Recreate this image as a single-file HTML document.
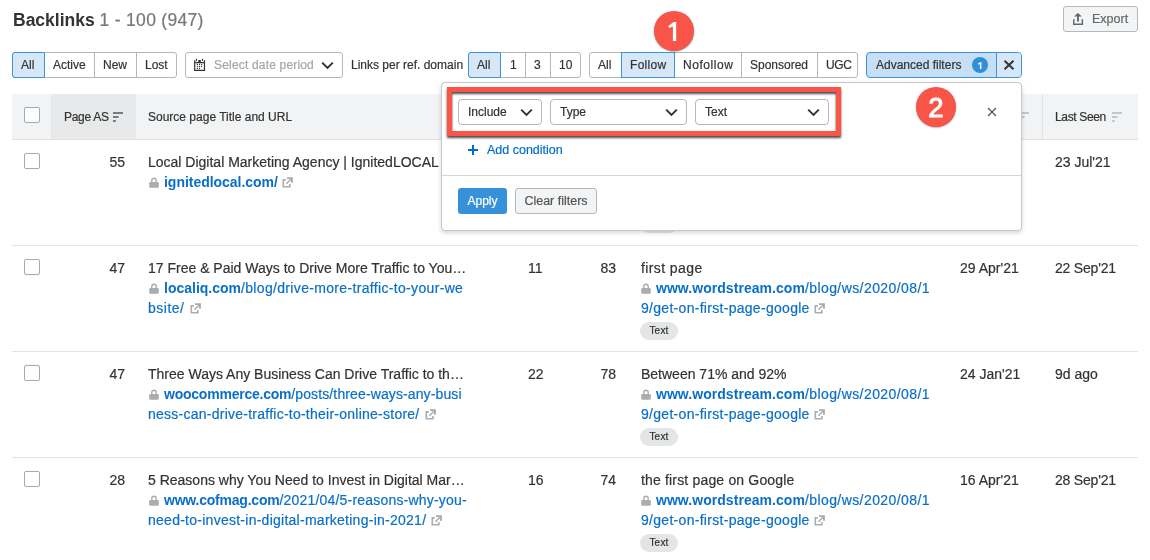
<!DOCTYPE html>
<html><head><meta charset="utf-8">
<style>
*{box-sizing:border-box;margin:0;padding:0}
html,body{width:1150px;height:560px;overflow:hidden;background:#fff}
body{position:relative;font-family:"Liberation Sans",sans-serif;color:#333;-webkit-font-smoothing:antialiased;will-change:transform;-webkit-text-stroke:0.2px}
b,.bo{-webkit-text-stroke:0}
.a{position:absolute;white-space:nowrap}
.box{position:absolute;border:1px solid #b3b8ba;border-radius:3px;background:#fff}
.vl{position:absolute;top:52px;width:1px;height:26px;background:#b3b8ba}
.bt{position:absolute;top:52px;height:26px;line-height:26px;font-size:12px;color:#333;white-space:nowrap}
.sel{position:absolute;top:52px;height:26px;border:1px solid #3b93dc;background:#d6e8f7}
.hdr{position:absolute;left:12px;top:94px;width:1126px;height:46px;background:#f2f3f4;border-bottom:1px solid #dfe1e2}
.cb{position:absolute;width:16px;height:16px;border:1px solid #a4aaad;border-radius:2px;background:#fff}
.h12{position:absolute;font-size:12px;line-height:16px;top:109px;white-space:nowrap}
.t{position:absolute;font-size:14px;line-height:20px;white-space:nowrap;color:#333}
.u{position:absolute;font-size:14px;line-height:20px;white-space:nowrap;color:#0a6fc8;letter-spacing:0.2px}
.u b{font-weight:bold}
.sep{position:absolute;left:12px;width:1126px;height:1px;background:#e2e4e5}
.lock{position:absolute;width:10px;height:10px}
.ext{position:absolute;width:11px;height:11px}
.tag{position:absolute;width:38px;height:18px;border-radius:9px;background:#e3e5e6;font-size:10px;line-height:17px;text-align:center;color:#333;letter-spacing:0.2px}
.dd{position:absolute;top:99px;height:26px;border:1px solid #b3b8ba;border-radius:4px;background:#fff;font-size:12px;line-height:24px;padding-left:9px;color:#333}
.chev{position:absolute;top:8px;right:8px;width:13px;height:9px}
.circ{-webkit-text-stroke:1px #fff;position:absolute;width:40px;height:40px;border-radius:50%;background:#f85448;color:#fff;font-weight:normal;font-size:27.5px;line-height:40px;text-align:center;box-shadow:0 0.5px 1.5px rgba(0,0,0,.45)}
.sort{position:absolute;width:10px;height:10px}
</style></head><body>

<!-- title -->
<div class="a" id="title" style="left:13px;top:10px;font-size:17.5px;line-height:20px"><b style="color:#333">Backlinks</b> <span style="color:#777;letter-spacing:0.3px">1 - 100 (947)</span></div>

<!-- export -->
<div class="box" style="left:1063px;top:6px;width:75px;height:26px;background:#f3f4f5"></div>
<svg class="a" style="left:1072px;top:12px" width="12" height="14" viewBox="0 0 12 14"><path d="M2.7 7.9H1.75V12.2H10.4V7.9H9.5" fill="none" stroke="#666" stroke-width="1.4"/><path d="M6 3.5V9.5" stroke="#666" stroke-width="1.9"/><path d="M2 4.5L5.9 0.9L9.9 4.5Z" fill="#666"/></svg>
<div class="a" id="export" style="left:1092px;top:6px;font-size:12.5px;line-height:26px;color:#666">Export</div>

<!-- group 1 -->
<div class="box" style="left:12px;top:52px;width:165px;height:26px"></div>
<div class="sel" style="left:12px;width:33px;border-radius:3px 0 0 3px"></div>
<div class="vl" style="left:94px"></div>
<div class="vl" style="left:136px"></div>
<div class="bt" style="left:21px">All</div>
<div class="bt" style="left:53px">Active</div>
<div class="bt" style="left:103px">New</div>
<div class="bt" style="left:145px">Lost</div>

<!-- date -->
<div class="box" style="left:185px;top:52px;width:158px;height:26px"></div>
<svg class="a" style="left:188px;top:54px" width="24" height="22" viewBox="0 0 24 22"><path d="M6.7 6.3V16.3H16.5V6.3M6.7 8.7H16.5" fill="none" stroke="#333" stroke-width="1.2"/><rect x="10.3" y="6" width="2.5" height="2" fill="#333"/><path d="M8.4 4.8V6.9M14.5 4.8V6.9" stroke="#333" stroke-width="1.1"/><g fill="#333"><circle cx="9.4" cy="10.4" r=".65"/><circle cx="11.5" cy="10.4" r=".65"/><circle cx="13.6" cy="10.4" r=".65"/><circle cx="9.4" cy="12.5" r=".65"/><circle cx="11.5" cy="12.5" r=".65"/><circle cx="13.6" cy="12.5" r=".65"/><circle cx="9.4" cy="14.5" r=".65"/><circle cx="11.5" cy="14.5" r=".65"/></g></svg>
<div class="bt" id="datetxt" style="left:214px;color:#a3a6a8;letter-spacing:0.18px">Select date period</div>
<svg class="a" style="left:321px;top:61px" width="13" height="9" viewBox="0 0 13 9"><path d="M1.2 1.6L6.5 6.9L11.8 1.6" fill="none" stroke="#333" stroke-width="2"/></svg>
<div class="bt" id="links" style="left:351px">Links per ref. domain</div>

<!-- group 2 -->
<div class="box" style="left:468px;top:52px;width:113px;height:26px"></div>
<div class="sel" style="left:468px;width:33px;border-radius:3px 0 0 3px"></div>
<div class="vl" style="left:525px"></div>
<div class="vl" style="left:550px"></div>
<div class="bt" style="left:477px">All</div>
<div class="bt" style="left:510px">1</div>
<div class="bt" style="left:534px">3</div>
<div class="bt" style="left:559px">10</div>

<!-- group 3 -->
<div class="box" style="left:589px;top:52px;width:269px;height:26px"></div>
<div class="sel" style="left:621px;width:54px"></div>
<div class="vl" style="left:741px"></div>
<div class="vl" style="left:817px"></div>
<div class="bt" style="left:598px">All</div>
<div class="bt" style="left:630px;letter-spacing:0.3px">Follow</div>
<div class="bt" style="left:683px;letter-spacing:0.55px">Nofollow</div>
<div class="bt" style="left:750px">Sponsored</div>
<div class="bt" style="left:826px;letter-spacing:-0.4px">UGC</div>

<!-- advanced -->
<div class="a" style="left:866px;top:52px;width:156px;height:26px;border:1px solid #3b93dc;border-radius:4px;background:#c6dff4;overflow:hidden"><div style="position:absolute;left:129px;top:0;width:30px;height:24px;background:#d6e8f7;border-left:1px solid #3b93dc"></div></div>
<div class="bt" style="left:876px">Advanced filters</div>
<svg class="a" style="left:972px;top:57px" width="16" height="16" viewBox="0 0 16 16"><circle cx="8" cy="8" r="8" fill="#2f8fd8"/><path d="M9.4 5.2V12H7.9V7L6.2 7.7L5.9 6.6L8.2 5.2Z" fill="#fff"/></svg>
<svg class="a" style="left:1003px;top:60px" width="12" height="10" viewBox="0 0 12 10"><path d="M1.5 0.8L10.5 9.2M10.5 0.8L1.5 9.2" stroke="#333" stroke-width="2"/></svg>

<!-- header -->
<div class="hdr"></div>
<div class="a" style="left:51px;top:94px;width:85px;height:45px;background:#e8e9ea"></div>
<div class="cb" style="left:24px;top:107px"></div>
<div class="h12" style="left:64px;letter-spacing:-0.3px">Page AS</div>
<svg class="sort" style="left:113px;top:112px" viewBox="0 0 10 10"><path d="M0 1H10M0 5H5.6M0 9H2.8" stroke="#555" stroke-width="1.6"/></svg>
<div class="h12" style="left:148px">Source page Title and URL</div>
<div class="a" style="left:1042px;top:94px;width:1px;height:45px;background:#e0e2e3"></div>
<svg class="sort" style="left:1019px;top:112px" viewBox="0 0 10 10"><path d="M0 1H10M0 5H5.6M0 9H2.8" stroke="#b5b8ba" stroke-width="1.6"/></svg>
<div class="h12" style="left:1055px;letter-spacing:-0.35px">Last Seen</div>
<svg class="sort" style="left:1112px;top:112px" viewBox="0 0 10 10"><path d="M0 1H10M0 5H5.6M0 9H2.8" stroke="#b5b8ba" stroke-width="1.6"/></svg>

<!-- separators -->
<div class="sep" style="top:245px"></div>
<div class="sep" style="top:351px"></div>
<div class="sep" style="top:457px"></div>

<!-- ROWS -->
<div class="cb" style="left:24px;top:153px"></div>
<div class="t" style="left:101px;top:152px;width:24px;text-align:right">55</div>
<div class="t" style="left:148px;top:152px">Local Digital Marketing Agency | IgnitedLOCAL</div>
<svg class="a" style="left:149px;top:177px" width="10" height="11" viewBox="0 0 10 11"><path d="M2.8 5.5V3.4A2.2 2.2 0 0 1 7.2 3.4V5.5" fill="none" stroke="#a9adaf" stroke-width="1.4"/><rect x="0.2" y="5" width="9.6" height="5.7" rx="1.2" fill="#a9adaf"/></svg>
<div class="u" style="left:164px;top:172px"><span style="letter-spacing:-0.027px;font-weight:bold;-webkit-text-stroke:0">ignitedlocal.com/</span></div>
<svg class="a" style="left:282px;top:177px" width="12" height="12" viewBox="0 0 12 12"><path d="M3.8 2.9H1.3V9.8H7.9V7.1" fill="none" stroke="#a9adaf" stroke-width="1.6"/><path d="M5 1.15H9.95V5.7" fill="none" stroke="#a9adaf" stroke-width="1.9"/><path d="M4.4 6.8L9.4 1.8" stroke="#a9adaf" stroke-width="1.6"/></svg>
<div class="t" style="left:1055px;top:152px;letter-spacing:0px">23 Jul'21</div>
<div class="tag" style="left:640px;top:215px">Text</div>

<div class="cb" style="left:24px;top:259px"></div>
<div class="t" style="left:101px;top:258px;width:24px;text-align:right">47</div>
<div class="t" style="left:148px;top:258px">17 Free &amp; Paid Ways to Drive More Traffic to You…</div>
<svg class="a" style="left:149px;top:283px" width="10" height="11" viewBox="0 0 10 11"><path d="M2.8 5.5V3.4A2.2 2.2 0 0 1 7.2 3.4V5.5" fill="none" stroke="#a9adaf" stroke-width="1.4"/><rect x="0.2" y="5" width="9.6" height="5.7" rx="1.2" fill="#a9adaf"/></svg>
<div class="u" style="left:164px;top:278px"><span style="letter-spacing:-0.003px;font-weight:bold;-webkit-text-stroke:0">localiq.com</span><span style="letter-spacing:0.332px">/blog/drive-more-traffic-to-your-we</span></div>
<div class="u" style="left:148px;top:298px"><span style="letter-spacing:0.505px">bsite/</span></div>
<svg class="a" style="left:190px;top:303px" width="12" height="12" viewBox="0 0 12 12"><path d="M3.8 2.9H1.3V9.8H7.9V7.1" fill="none" stroke="#a9adaf" stroke-width="1.6"/><path d="M5 1.15H9.95V5.7" fill="none" stroke="#a9adaf" stroke-width="1.9"/><path d="M4.4 6.8L9.4 1.8" stroke="#a9adaf" stroke-width="1.6"/></svg>
<div class="t" style="left:528px;top:258px">11</div>
<div class="t" style="left:592px;top:258px;width:24px;text-align:right">83</div>
<div class="t" style="left:641px;top:258px;letter-spacing:0.4px">first page</div>
<svg class="a" style="left:641px;top:283px" width="10" height="11" viewBox="0 0 10 11"><path d="M2.8 5.5V3.4A2.2 2.2 0 0 1 7.2 3.4V5.5" fill="none" stroke="#a9adaf" stroke-width="1.4"/><rect x="0.2" y="5" width="9.6" height="5.7" rx="1.2" fill="#a9adaf"/></svg>
<div class="u" style="left:656px;top:278px"><span style="letter-spacing:0.046px;font-weight:bold;-webkit-text-stroke:0">www.wordstream.com</span><span style="letter-spacing:0.420px">/blog/ws/2020/08/1</span></div>
<div class="u" style="left:641px;top:298px"><span style="letter-spacing:0.292px">9/get-on-first-page-google</span></div>
<svg class="a" style="left:814px;top:303px" width="12" height="12" viewBox="0 0 12 12"><path d="M3.8 2.9H1.3V9.8H7.9V7.1" fill="none" stroke="#a9adaf" stroke-width="1.6"/><path d="M5 1.15H9.95V5.7" fill="none" stroke="#a9adaf" stroke-width="1.9"/><path d="M4.4 6.8L9.4 1.8" stroke="#a9adaf" stroke-width="1.6"/></svg>
<div class="tag" style="left:640px;top:322px">Text</div>
<div class="t" style="left:960px;top:258px">29 Apr'21</div>
<div class="t" style="left:1055px;top:258px;letter-spacing:-0.2px">22 Sep'21</div>

<div class="cb" style="left:24px;top:365px"></div>
<div class="t" style="left:101px;top:364px;width:24px;text-align:right">47</div>
<div class="t" style="left:148px;top:364px">Three Ways Any Business Can Drive Traffic to th…</div>
<svg class="a" style="left:149px;top:389px" width="10" height="11" viewBox="0 0 10 11"><path d="M2.8 5.5V3.4A2.2 2.2 0 0 1 7.2 3.4V5.5" fill="none" stroke="#a9adaf" stroke-width="1.4"/><rect x="0.2" y="5" width="9.6" height="5.7" rx="1.2" fill="#a9adaf"/></svg>
<div class="u" style="left:164px;top:384px"><span style="letter-spacing:-0.228px;font-weight:bold;-webkit-text-stroke:0">woocommerce.com</span><span style="letter-spacing:0.119px">/posts/three-ways-any-busi</span></div>
<div class="u" style="left:148px;top:404px"><span style="letter-spacing:0.247px">ness-can-drive-traffic-to-their-online-store/</span></div>
<svg class="a" style="left:425px;top:409px" width="12" height="12" viewBox="0 0 12 12"><path d="M3.8 2.9H1.3V9.8H7.9V7.1" fill="none" stroke="#a9adaf" stroke-width="1.6"/><path d="M5 1.15H9.95V5.7" fill="none" stroke="#a9adaf" stroke-width="1.9"/><path d="M4.4 6.8L9.4 1.8" stroke="#a9adaf" stroke-width="1.6"/></svg>
<div class="t" style="left:528px;top:364px">22</div>
<div class="t" style="left:592px;top:364px;width:24px;text-align:right">78</div>
<div class="t" style="left:641px;top:364px;letter-spacing:0px">Between 71% and 92%</div>
<svg class="a" style="left:641px;top:389px" width="10" height="11" viewBox="0 0 10 11"><path d="M2.8 5.5V3.4A2.2 2.2 0 0 1 7.2 3.4V5.5" fill="none" stroke="#a9adaf" stroke-width="1.4"/><rect x="0.2" y="5" width="9.6" height="5.7" rx="1.2" fill="#a9adaf"/></svg>
<div class="u" style="left:656px;top:384px"><span style="letter-spacing:0.046px;font-weight:bold;-webkit-text-stroke:0">www.wordstream.com</span><span style="letter-spacing:0.420px">/blog/ws/2020/08/1</span></div>
<div class="u" style="left:641px;top:404px"><span style="letter-spacing:0.292px">9/get-on-first-page-google</span></div>
<svg class="a" style="left:814px;top:409px" width="12" height="12" viewBox="0 0 12 12"><path d="M3.8 2.9H1.3V9.8H7.9V7.1" fill="none" stroke="#a9adaf" stroke-width="1.6"/><path d="M5 1.15H9.95V5.7" fill="none" stroke="#a9adaf" stroke-width="1.9"/><path d="M4.4 6.8L9.4 1.8" stroke="#a9adaf" stroke-width="1.6"/></svg>
<div class="tag" style="left:640px;top:428px">Text</div>
<div class="t" style="left:960px;top:364px">24 Jan'21</div>
<div class="t" style="left:1055px;top:364px;letter-spacing:0px">9d ago</div>

<div class="cb" style="left:24px;top:471px"></div>
<div class="t" style="left:101px;top:470px;width:24px;text-align:right">28</div>
<div class="t" style="left:148px;top:470px">5 Reasons why You Need to Invest in Digital Mar…</div>
<svg class="a" style="left:149px;top:495px" width="10" height="11" viewBox="0 0 10 11"><path d="M2.8 5.5V3.4A2.2 2.2 0 0 1 7.2 3.4V5.5" fill="none" stroke="#a9adaf" stroke-width="1.4"/><rect x="0.2" y="5" width="9.6" height="5.7" rx="1.2" fill="#a9adaf"/></svg>
<div class="u" style="left:164px;top:490px"><span style="letter-spacing:-0.215px;font-weight:bold;-webkit-text-stroke:0">www.cofmag.com</span><span style="letter-spacing:0.192px">/2021/04/5-reasons-why-you-</span></div>
<div class="u" style="left:148px;top:510px"><span style="letter-spacing:0.259px">need-to-invest-in-digital-marketing-in-2021/</span></div>
<svg class="a" style="left:431px;top:515px" width="12" height="12" viewBox="0 0 12 12"><path d="M3.8 2.9H1.3V9.8H7.9V7.1" fill="none" stroke="#a9adaf" stroke-width="1.6"/><path d="M5 1.15H9.95V5.7" fill="none" stroke="#a9adaf" stroke-width="1.9"/><path d="M4.4 6.8L9.4 1.8" stroke="#a9adaf" stroke-width="1.6"/></svg>
<div class="t" style="left:528px;top:470px">16</div>
<div class="t" style="left:592px;top:470px;width:24px;text-align:right">74</div>
<div class="t" style="left:641px;top:470px;letter-spacing:0.17px">the first page on Google</div>
<svg class="a" style="left:641px;top:495px" width="10" height="11" viewBox="0 0 10 11"><path d="M2.8 5.5V3.4A2.2 2.2 0 0 1 7.2 3.4V5.5" fill="none" stroke="#a9adaf" stroke-width="1.4"/><rect x="0.2" y="5" width="9.6" height="5.7" rx="1.2" fill="#a9adaf"/></svg>
<div class="u" style="left:656px;top:490px"><span style="letter-spacing:0.046px;font-weight:bold;-webkit-text-stroke:0">www.wordstream.com</span><span style="letter-spacing:0.420px">/blog/ws/2020/08/1</span></div>
<div class="u" style="left:641px;top:510px"><span style="letter-spacing:0.292px">9/get-on-first-page-google</span></div>
<svg class="a" style="left:814px;top:515px" width="12" height="12" viewBox="0 0 12 12"><path d="M3.8 2.9H1.3V9.8H7.9V7.1" fill="none" stroke="#a9adaf" stroke-width="1.6"/><path d="M5 1.15H9.95V5.7" fill="none" stroke="#a9adaf" stroke-width="1.9"/><path d="M4.4 6.8L9.4 1.8" stroke="#a9adaf" stroke-width="1.6"/></svg>
<div class="tag" style="left:640px;top:534px">Text</div>
<div class="t" style="left:960px;top:470px">16 Apr'21</div>
<div class="t" style="left:1055px;top:470px;letter-spacing:-0.2px">28 Sep'21</div>

<!-- POPUP -->
<div class="a" style="left:441px;top:82px;width:581px;height:149px;background:#fff;border:1px solid #c5c9cb;border-radius:4px;box-shadow:0 2px 4px rgba(0,0,0,.16)"></div>
<div class="dd" style="left:458px;width:84px">Include<svg class="chev" viewBox="0 0 13 9"><path d="M1.2 1.6L6.5 6.9L11.8 1.6" fill="none" stroke="#333" stroke-width="2"/></svg></div>
<div class="dd" style="left:550px;width:137px">Type<svg class="chev" viewBox="0 0 13 9"><path d="M1.2 1.6L6.5 6.9L11.8 1.6" fill="none" stroke="#333" stroke-width="2"/></svg></div>
<div class="dd" style="left:695px;width:134px">Text<svg class="chev" viewBox="0 0 13 9"><path d="M1.2 1.6L6.5 6.9L11.8 1.6" fill="none" stroke="#333" stroke-width="2"/></svg></div>
<div class="a" style="left:447px;top:87px;width:394px;height:49px;border:5px solid #fb5448;filter:drop-shadow(0.5px 2px 1.2px rgba(0,0,0,.7))"></div>
<svg class="a" style="left:467px;top:144px" width="12" height="12" viewBox="0 0 12 12"><path d="M6 1V11M1 6H11" stroke="#006dca" stroke-width="2"/></svg>
<div class="a" style="left:487px;top:142px;font-size:12.5px;line-height:16px;color:#006dca">Add condition</div>
<div class="a" style="left:442px;top:175px;width:579px;height:1px;background:#d3d6d7"></div>
<div class="a" style="left:458px;top:188px;width:49px;height:26px;border-radius:3px;background:#3592da;color:#fff;font-size:12px;line-height:26px;text-align:center">Apply</div>
<div class="a" style="left:515px;top:188px;width:82px;height:26px;border-radius:3px;border:1px solid #b3b8ba;background:#f3f4f5;color:#555;font-size:12.5px;line-height:24px;text-align:center">Clear filters</div>
<svg class="a" style="left:987px;top:107px" width="10" height="10" viewBox="0 0 10 10"><path d="M1 1L9 9M9 1L1 9" stroke="#5a5a5a" stroke-width="1.25"/></svg>

<!-- annotation circles -->
<div class="circ" style="left:654px;top:11px"><svg style="position:absolute;left:0;top:0" width="40" height="40" viewBox="0 0 40 40"><path d="M22.2 11.1V30H18.9V15.4L15.2 17L14.3 15.1L19.6 11.1Z" fill="#fff"/></svg></div>
<div class="circ" style="left:916px;top:87px"><span style="position:relative;top:1px">2</span></div>

</body></html>
